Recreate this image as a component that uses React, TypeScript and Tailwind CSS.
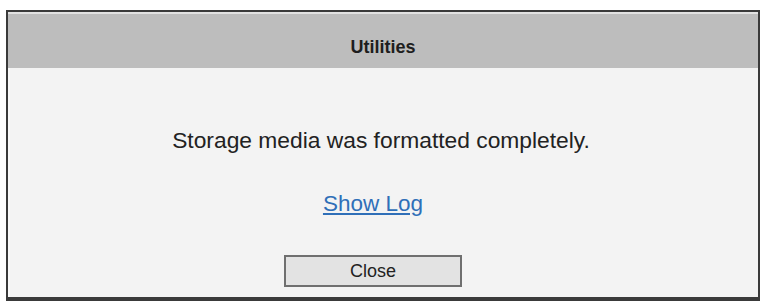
export default function App() {
  return (
    <div className="h-[301px] w-full bg-white pt-[10px] pl-[6px] pr-[2px]" style={{ fontFamily: '"Liberation Sans", Arial, sans-serif' }}>
      <div className="flex h-full flex-col border-2 border-b-4 border-[#3a3a3a]">
        <div className="flex h-[56px] items-center justify-center border-t-2 border-[#e2e2e2] bg-[#bdbdbd] pt-[12px]">
          <span className="text-[18px] font-bold text-[#1e1e1e]">Utilities</span>
        </div>
        <div className="flex flex-1 flex-col items-center border-l-2 border-[#fafafa] bg-[#f3f3f3]">
          <p className="mt-[59px] ml-[-6px] text-[22.8px] leading-[26px] text-[#222]">Storage media was formatted completely.</p>
          <a href="#" className="mt-[38px] mr-[22px] text-[22.5px] leading-[26px] text-[#2f6fb8] underline underline-offset-2">
            Show Log
          </a>
          <button className="mt-[38px] mr-[22px] h-[32px] w-[178px] border-2 border-[#6f6f6f] bg-[#e3e3e3] text-[18px] text-[#222]">
            Close
          </button>
        </div>
      </div>
    </div>
  )
}
